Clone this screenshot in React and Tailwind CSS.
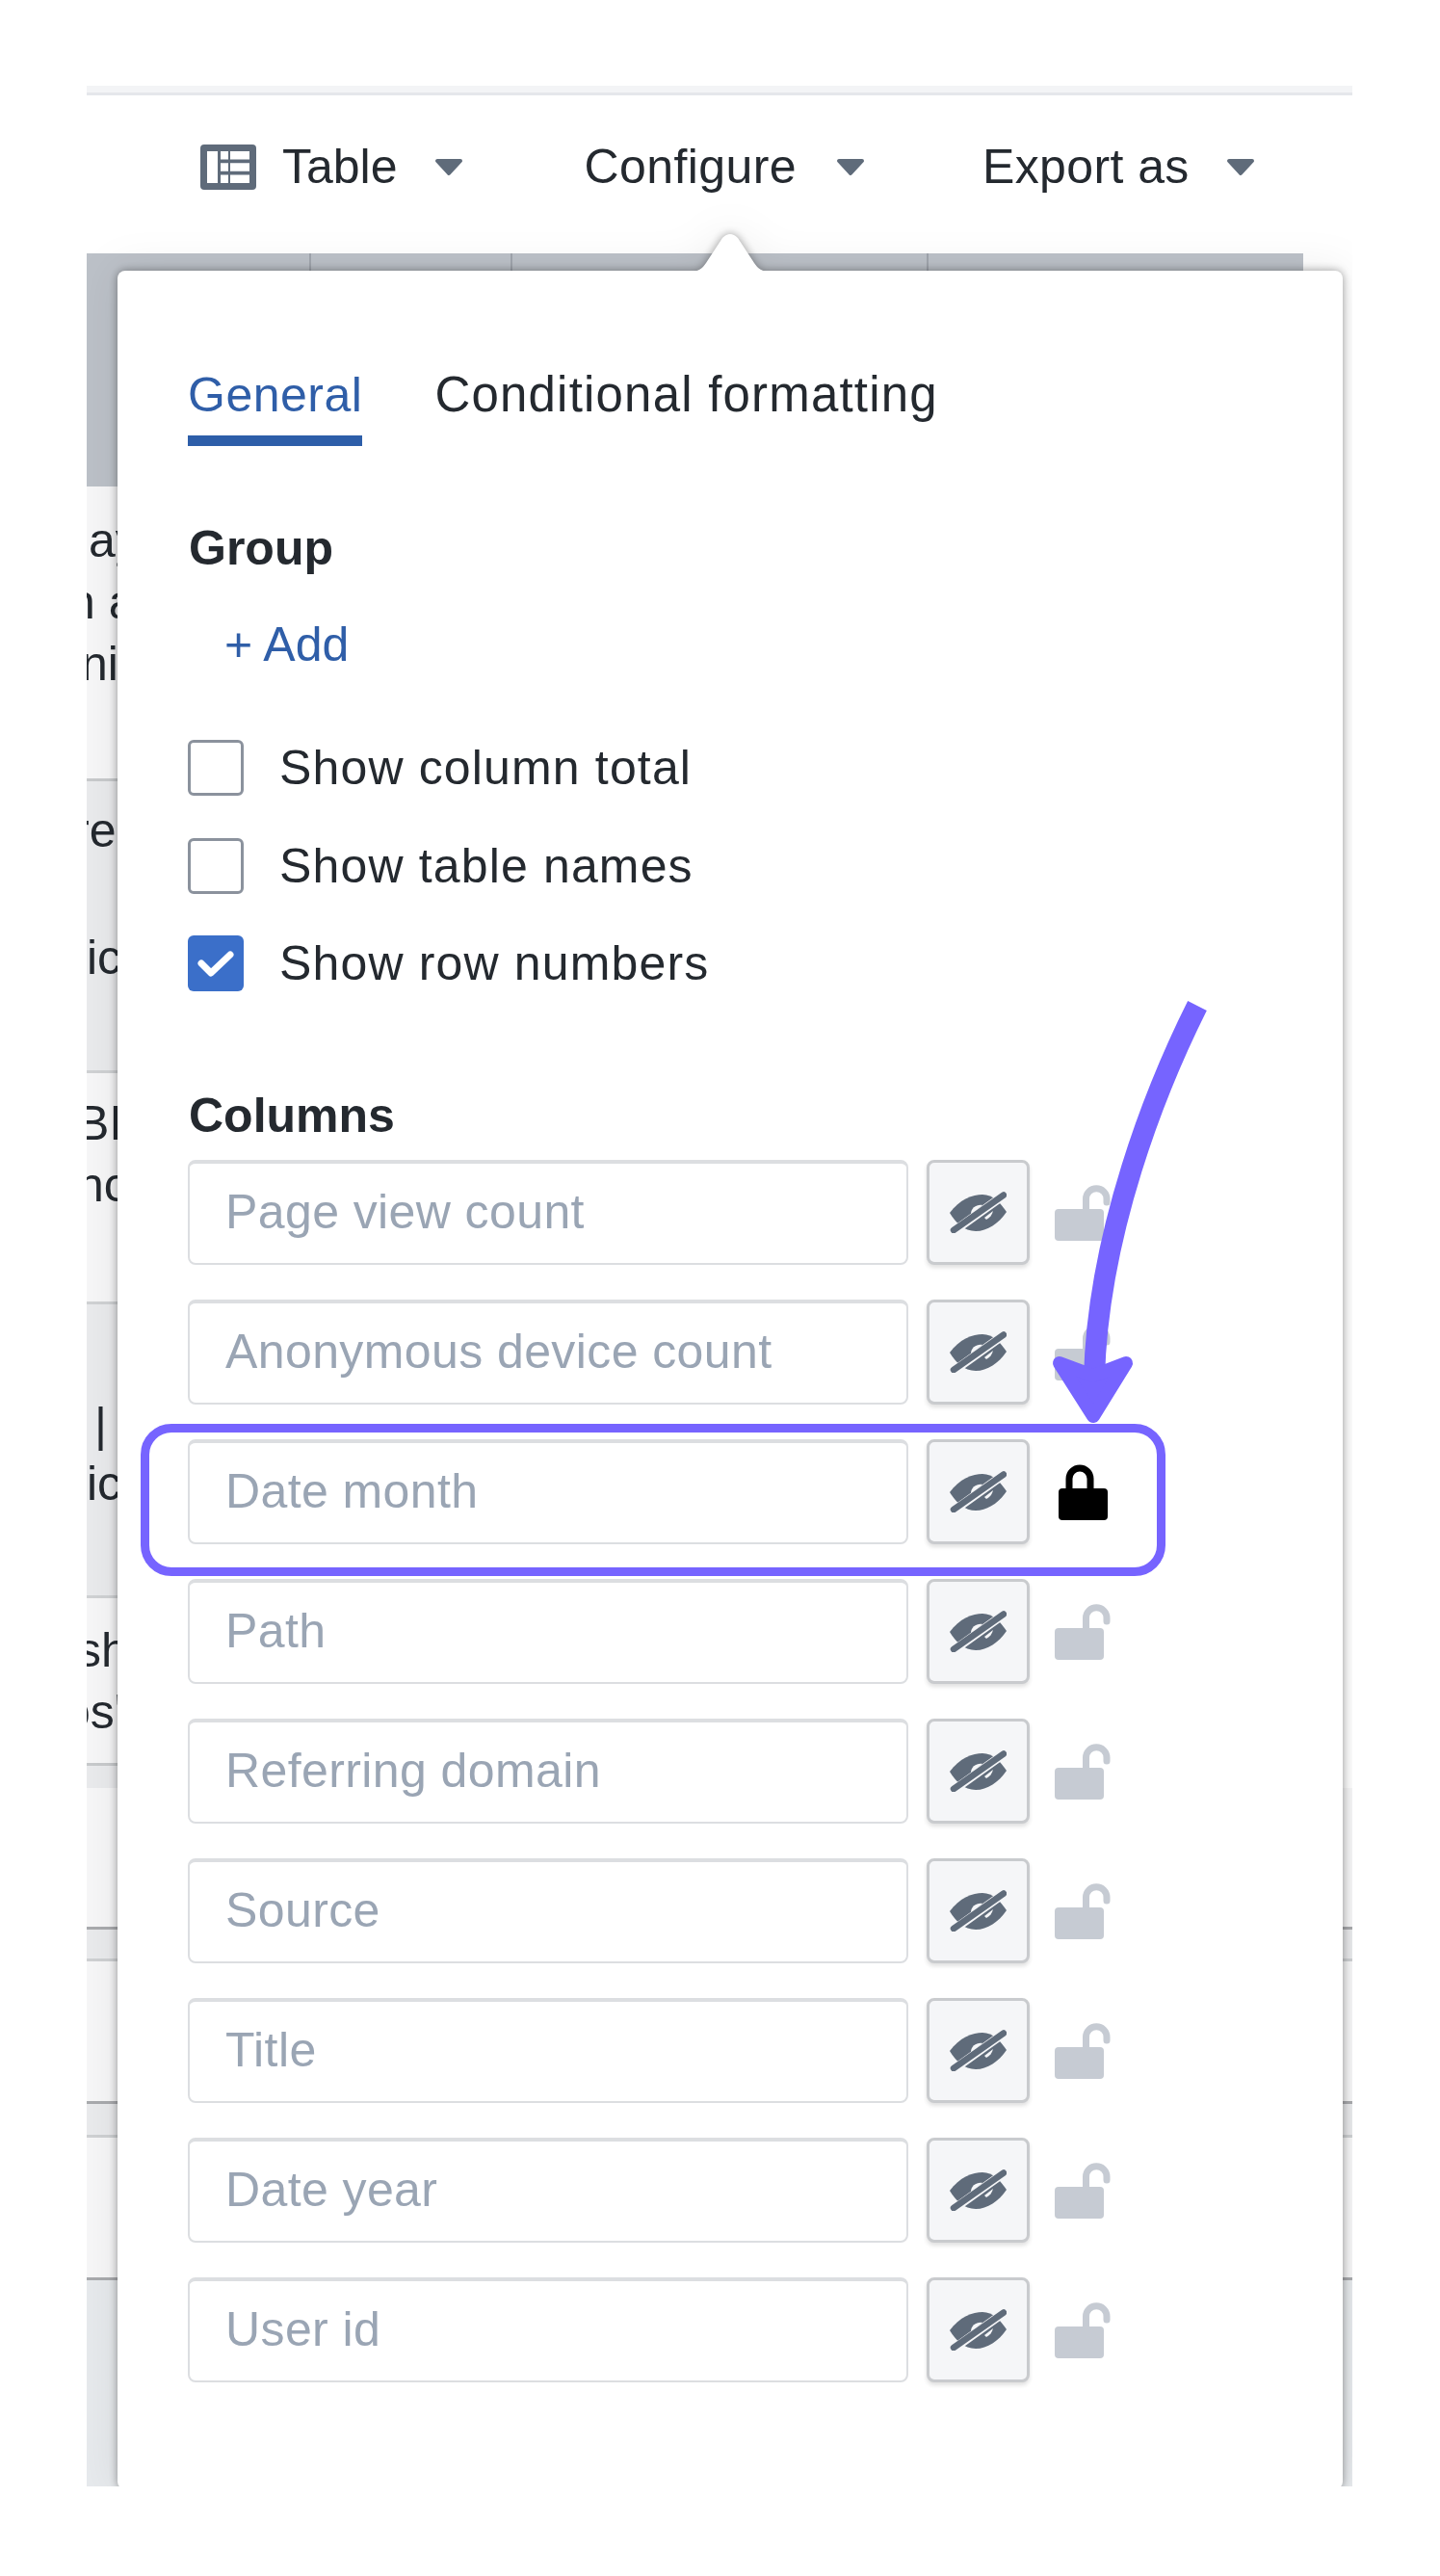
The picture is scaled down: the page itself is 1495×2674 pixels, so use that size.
import React from "react";

const columns = ["Page view count","Anonymous device count","Date month","Path","Referring domain","Source","Title","Date year","User id"];

function Caret() {
  return (
    <svg width="30" height="19" viewBox="0 0 30 19" className="block shrink-0">
      <polygon points="3,3 27,3 15,16" fill="#5f6b7a" stroke="#5f6b7a" strokeWidth="4" strokeLinejoin="round" />
    </svg>
  );
}

function TableIcon() {
  return (
    <svg width="58" height="47" viewBox="0 0 58 47" className="block shrink-0">
      <rect width="58" height="47" rx="4" fill="#5f6b7a" />
      <rect x="7" y="7" width="11" height="33" fill="#fff" />
      {[7, 19.25, 31.5].map((y) => (
        <g key={y} fill="#fff">
          <rect x="21" y={y} width="8" height="8.5" />
          <rect x="31" y={y} width="20" height="8.5" />
        </g>
      ))}
    </svg>
  );
}

function EyeSlash() {
  return (
    <svg width="59" height="43" viewBox="0 0 59 43" className="block">
      <path d="M0 22C10 8 24 3 34 3C45 3 53 12 59 21C51 33 39 41 27 41C15 41 6 32 0 22Z" fill="#5f6b7a" />
      <path d="M22 23C22 17 28 13 34 14L22 24Z" fill="#f5f6f8" />
      <path d="M38 29C42 27 44 24 45 20L36 27Z" fill="#f5f6f8" />
      <line x1="0" y1="44" x2="60" y2="1" stroke="#f5f6f8" strokeWidth="9" />
      <line x1="4" y1="40" x2="56" y2="3.5" stroke="#5f6b7a" strokeWidth="6.5" strokeLinecap="round" />
    </svg>
  );
}

function OpenLock() {
  return (
    <svg width="58" height="58" viewBox="0 0 58 58" className="block">
      <path d="M32.5 26V14.5a10.75 10.75 0 0 1 21.5 0V18" fill="none" stroke="#c6cbd3" strokeWidth="7" strokeLinecap="round" />
      <rect x="0" y="25" width="51" height="33" rx="4" fill="#c6cbd3" />
    </svg>
  );
}

function ClosedLock() {
  return (
    <svg width="58" height="58" viewBox="0 0 58 58" className="block">
      <path d="M15 26V15a11 11 0 0 1 22 0V26" fill="none" stroke="#000" strokeWidth="7" />
      <rect x="4" y="25" width="51" height="33" rx="4" fill="#000" />
    </svg>
  );
}

function CheckRow({ label, checked }) {
  return (
    <div className="flex items-center gap-[37px] h-[58px]">
      {checked ? (
        <div className="w-[58px] h-[58px] rounded-[6px] bg-[#3b6fc9] flex items-center justify-center">
          <svg width="38" height="28" viewBox="0 0 38 28"><path d="M4 14L14 24L34 5" fill="none" stroke="#fff" strokeWidth="7" strokeLinecap="round" strokeLinejoin="round" /></svg>
        </div>
      ) : (
        <div className="w-[58px] h-[58px] rounded-[6px] border-[3px] border-[#8b929d] bg-white" />
      )}
      <span className="text-[50px] leading-[58px] tracking-[1.15px] text-[#24292f]">{label}</span>
    </div>
  );
}

function ColumnRow({ name, locked }) {
  return (
    <div className="flex items-start h-[109px]">
      <div className="w-[748px] h-[109px] rounded-[8px] border-2 border-t-[4px] border-[#dcdee1] bg-white pl-[37px] pb-[3px] flex items-center text-[50px] tracking-[0.4px] text-[#9aa5b4] whitespace-nowrap">
        {name}
      </div>
      <div className="ml-[19px] w-[107px] h-[109px] rounded-[8px] border-[3px] border-[#c9cbce] bg-[#f5f6f8] shadow-[0_3px_4px_rgba(0,0,0,0.12)] flex items-center justify-center">
        <EyeSlash />
      </div>
      <div className="ml-[26px] mt-[26px]">{locked ? <ClosedLock /> : <OpenLock />}</div>
    </div>
  );
}

function Row({ bg, h, border, pad, children }) {
  return (
    <div className={`w-[1263px] overflow-hidden whitespace-nowrap text-[50px] leading-[64px] text-[#24292f] ${bg} ${h} ${border} ${pad}`}>
      {children}
    </div>
  );
}

export default function App() {
  return (
    <div className="w-[1495px] h-[2674px] bg-white overflow-hidden font-['Liberation_Sans',Arial,sans-serif] pt-[89px]">
      <div className="relative ml-[90px] w-[1314px] h-[2492px] overflow-hidden bg-white">
        <div className="h-[10px] bg-[#f3f4f6] border-b-[3px] border-[#e5e7eb]" />

        <div className="h-[164px] flex items-center pl-[118px] pb-[16px] text-[50px] text-[#24292f]">
          <TableIcon />
          <span className="ml-[27px]">Table</span>
          <span className="ml-[38px]"><Caret /></span>
          <span className="ml-[126px] tracking-[0.4px]">Configure</span>
          <span className="ml-[41px]"><Caret /></span>
          <span className="ml-[122px] tracking-[0.4px]">Export as</span>
          <span className="ml-[38px]"><Caret /></span>
        </div>

        <div className="w-[1263px] h-[242px] bg-[#bcc1c8] flex">
          <div className="w-[233px] border-r-2 border-[#a0a5ad]" />
          <div className="w-[209px] border-r-2 border-[#a0a5ad]" />
          <div className="w-[432px] border-r-2 border-[#a0a5ad]" />
        </div>

        <Row bg="bg-[#f7f7f8]" h="h-[306px]" border="border-b-[3px] border-[#c8cacc]" pad="pt-[24px] pl-[2px]">
          <div>ay</div>
          <div className="-ml-[21px]">n a</div>
          <div className="-ml-[8px]">ni</div>
        </Row>
        <Row bg="bg-[#eaebed]" h="h-[303px]" border="border-b-[3px] border-[#d0d2d4]" pad="pt-[19px]">
          <div className="-ml-[14px]">re</div>
          <div className="mt-[68px]">ic</div>
        </Row>
        <Row bg="bg-[#f7f7f8]" h="h-[240px]" border="border-b-[3px] border-[#d0d2d4]" pad="pt-[20px]">
          <div className="-ml-[10px]">BI</div>
          <div className="-ml-[10px]">nc</div>
        </Row>
        <Row bg="bg-[#eaebed]" h="h-[305px]" border="border-b-[3px] border-[#d0d2d4]" pad="pt-[93px] pl-[8px]">
          <div>|</div>
          <div className="-ml-[8px] -mt-[3px]">ic</div>
        </Row>
        <Row bg="bg-[#f7f7f8]" h="h-[174px]" border="border-b-[3px] border-[#c8cacc]" pad="pt-[22px]">
          <div className="-ml-[10px]">sh</div>
          <div className="-ml-[24px]">os'</div>
        </Row>
        <div className="w-[1263px] h-[23px] bg-[#eaebed]" />
        <div className="h-[147px] bg-[#f7f7f8] border-b-[3px] border-[#a9abae]" />
        <div className="h-[33px] bg-[#eaebed] border-b-[3px] border-[#cfd1d3]" />
        <div className="h-[148px] bg-[#f7f7f8] border-b-[3px] border-[#a9abae]" />
        <div className="h-[35px] bg-[#eaebed] border-b-[3px] border-[#cfd1d3]" />
        <div className="h-[148px] bg-[#f7f7f8] border-b-[3px] border-[#a9abae]" />
        <div className="h-[215px] bg-[#e7eaed]" />

        <div className="absolute left-[32px] top-[192px] w-[1272px] h-[2303px] bg-white rounded-[8px] [filter:drop-shadow(0_0_5px_rgba(0,0,0,0.38))_drop-shadow(0_0_22px_rgba(0,0,0,0.08))]">
          <svg width="84" height="41" viewBox="0 0 84 41" className="absolute left-[594px] -top-[39px]">
            <path d="M0 40C9 40 13 37 17 31L34 5Q42 -3 50 5L67 31C71 37 75 40 84 40Z" fill="#fff" />
          </svg>

          <div className="pl-[73px] pt-[99px]">
            <div className="flex text-[50px] leading-[60px]">
              <div className="h-[83px] border-b-[11px] border-[#2d5ea9] text-[#2f5ea8] tracking-[0.5px]">General</div>
              <div className="ml-[75px] text-[51px] text-[#24292f] tracking-[1.2px]">Conditional formatting</div>
            </div>

            <div className="ml-[1px] mt-[76px] text-[50px] leading-[60px] font-bold text-[#24292f]">Group</div>
            <div className="mt-[40px] ml-[38px] text-[50px] leading-[60px] text-[#2f5ea8]">+ Add</div>

            <div className="mt-[69px] flex flex-col gap-[43.5px]">
              <CheckRow label="Show column total" />
              <CheckRow label="Show table names" />
              <CheckRow label="Show row numbers" checked />
            </div>

            <div className="ml-[1px] mt-[99px] text-[50px] leading-[60px] font-bold text-[#24292f]">Columns</div>
            <div className="mt-[16px] flex flex-col gap-[36px]">
              {columns.map((c, i) => (
                <ColumnRow key={c} name={c} locked={i === 2} />
              ))}
            </div>
          </div>
        </div>

        <div className="absolute left-[56px] top-[1389px] w-[1064px] h-[158px] rounded-[32px] border-[9px] border-[#7664ff]" />
        <svg className="absolute left-[960px] top-[930px]" width="260" height="480" viewBox="1050 1019 260 480">
          <path d="M1243 1044C1200 1130 1140 1280 1136 1430" fill="none" stroke="#7664ff" strokeWidth="22" />
          <path d="M1100 1415L1135 1428L1169 1415L1135 1470Z" fill="#7664ff" stroke="#7664ff" strokeWidth="14" strokeLinejoin="round" />
        </svg>
      </div>
    </div>
  );
}
